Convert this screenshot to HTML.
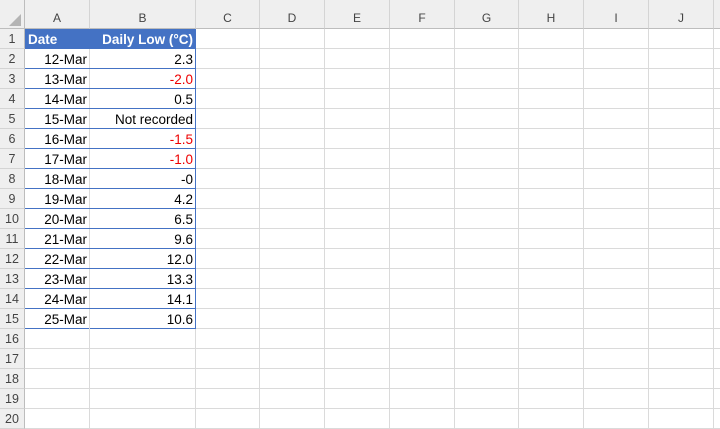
<!DOCTYPE html><html><head><style>
body{margin:0;width:720px;height:425px;overflow:hidden;background:#fff;font-family:"Liberation Sans",Calibri,sans-serif;font-size:13.5px;position:relative}
.a{position:absolute;box-sizing:border-box}
.ch{top:0;height:29px;background:#efefef;border-right:1px solid #d4d4d4;border-bottom:1px solid #bdbdbd;color:#444;font-size:12px;text-align:center;line-height:36px}
.rh{left:0;width:25px;height:20px;background:#efefef;border-bottom:1px solid #d4d4d4;border-right:1px solid #bdbdbd;color:#444;font-size:12.5px;text-align:center;line-height:20px}
.hl{left:25px;width:695px;height:1px;background:#dadada}
.vl{top:29px;width:1px;height:400px;background:#dadada}
.c{height:20px;line-height:21px;padding:0 3px;white-space:nowrap;color:#000}
.r{text-align:right}.red{color:#e00}
</style></head><body>
<div class="a" style="left:0;top:0;width:25px;height:29px;background:#efefef;border-right:1px solid #bdbdbd;border-bottom:1px solid #bdbdbd"></div>
<svg class="a" style="left:9px;top:14px" width="12" height="12"><polygon points="12,0 12,12 0,12" fill="#b4b4b4"/></svg>
<div id="g"></div>
<script>
var cols=[["A",25,90],["B",90,196],["C",196,260],["D",260,325],["E",325,390],["F",390,455],["G",455,519],["H",519,584],["I",584,649],["J",649,714],["",714,760]];
var h="";
cols.forEach(function(c){h+='<div class="a ch" style="left:'+c[1]+'px;width:'+(c[2]-c[1])+'px">'+c[0]+'</div>';h+='<div class="a vl" style="left:'+(c[2]-1)+'px"></div>';});
for(var i=1;i<=20;i++){var t=29+20*(i-1);h+='<div class="a rh" style="top:'+t+'px">'+i+'</div>';h+='<div class="a hl" style="top:'+(t+19)+'px"></div>';}
var d=[["12-Mar","2.3"],["13-Mar","-2.0",1],["14-Mar","0.5"],["15-Mar","Not recorded"],["16-Mar","-1.5",1],["17-Mar","-1.0",1],["18-Mar","-0"],["19-Mar","4.2"],["20-Mar","6.5"],["21-Mar","9.6"],["22-Mar","12.0"],["23-Mar","13.3"],["24-Mar","14.1"],["25-Mar","10.6"]];
h+='<div class="a" style="left:25px;top:29px;width:171px;height:20px;background:#4472c4"></div>';
h+='<div class="a c" style="left:25px;top:29px;width:65px;color:#fff;font-weight:bold">Date</div>';
h+='<div class="a c r" style="left:90px;top:29px;width:106px;color:#fff;font-weight:bold">Daily Low (°C)</div>';
d.forEach(function(r,k){var t=49+20*k;
h+='<div class="a" style="left:25px;top:'+(t-1)+'px;width:171px;height:21px;background:#fff;border-top:1px solid #4472c4;border-bottom:1px solid #4472c4"></div>';
h+='<div class="a" style="left:89px;top:'+t+'px;width:1px;height:20px;background:#dadada"></div>';
h+='<div class="a c r" style="left:25px;top:'+t+'px;width:65px">'+r[0]+'</div>';
h+='<div class="a c r'+(r[2]?' red':'')+'" style="left:90px;top:'+t+'px;width:106px">'+r[1]+'</div>';});
h+='<div class="a" style="left:195px;top:29px;width:1px;height:300px;background:#4472c4"></div>';
document.getElementById("g").innerHTML=h;
</script>
</body></html>
